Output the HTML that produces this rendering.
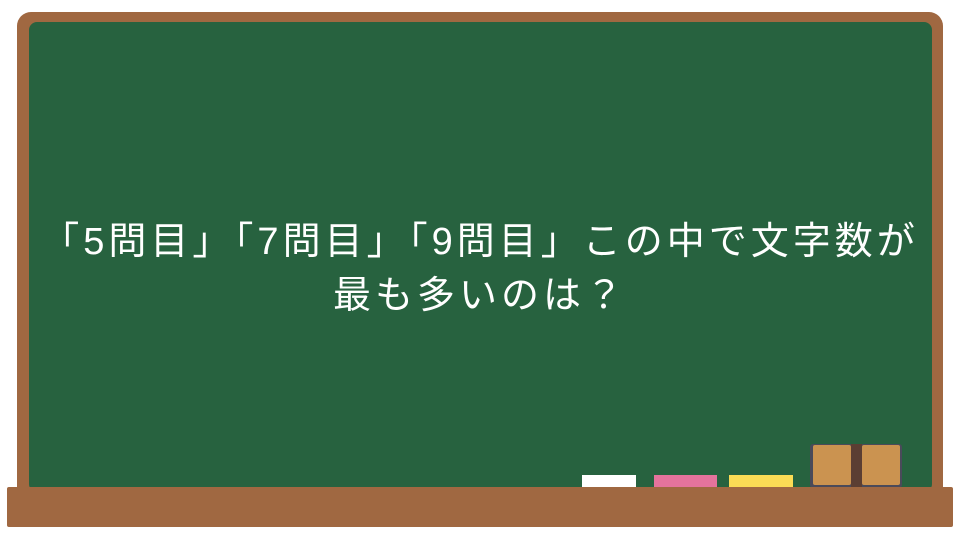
<!DOCTYPE html>
<html><head><meta charset="utf-8"><style>
html,body{margin:0;padding:0;width:960px;height:540px;background:#fff;overflow:hidden;position:relative}
.frame{position:absolute;left:17px;top:12px;width:926px;height:490px;background:#a06841;border-radius:14px}
.board{position:absolute;left:29px;top:22px;width:903px;height:470px;background:#27623f;border-radius:8px}
.ledge{position:absolute;left:7px;top:487px;width:946px;height:40px;background:#a06841;border-radius:2px}
.c{position:absolute;top:475px;height:12px}
.txt{position:absolute;left:0;top:215px;width:960px;text-align:center;color:#fff;font-family:"Liberation Sans","Noto Sans CJK JP",sans-serif;font-size:38px;line-height:54px;letter-spacing:4px;white-space:nowrap}
</style></head><body>
<div class="frame"></div>
<div class="board"></div>
<div class="txt">「5問目」「7問目」「9問目」この中で文字数が<br>最も多いのは？</div>
<div class="c" style="left:582px;width:54px;background:#fff"></div>
<div class="c" style="left:654px;width:63px;background:#e4739c"></div>
<div class="c" style="left:729px;width:64px;background:#fbdc55"></div>
<div style="position:absolute;left:810px;top:444px;width:92px;height:44px;background:#4a4a5a;border-radius:3px"></div>
<div style="position:absolute;left:813px;top:445px;width:38px;height:40px;background:#cb9350;border-radius:2px"></div>
<div style="position:absolute;left:851px;top:444px;width:11px;height:44px;background:#5b3e33"></div>
<div style="position:absolute;left:862px;top:445px;width:38px;height:40px;background:#cb9350;border-radius:2px"></div>
<div class="ledge"></div>
</body></html>
